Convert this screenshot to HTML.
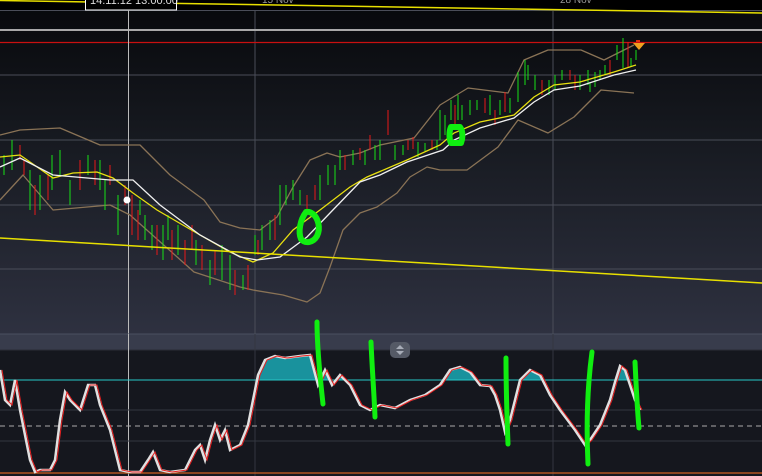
<!DOCTYPE html>
<html><head><meta charset="utf-8"><style>
html,body{margin:0;padding:0;background:#000;}
svg{display:block}
</style></head><body>
<svg width="762" height="476" viewBox="0 0 762 476" xmlns="http://www.w3.org/2000/svg" font-family="Liberation Sans, sans-serif">
<defs>
<linearGradient id="bg" x1="0" y1="0" x2="0" y2="1">
<stop offset="0" stop-color="#07080b"/>
<stop offset="0.45" stop-color="#181b22"/>
<stop offset="1" stop-color="#2e3140"/>
</linearGradient>
<clipPath id="above"><rect x="0" y="340" width="762" height="40"/></clipPath>
</defs>
<rect x="0" y="0" width="762" height="334" fill="url(#bg)"/>
<rect x="0" y="0" width="762" height="10" fill="#000"/>
<g stroke="#4a4d58" stroke-width="1">
<line x1="0" y1="75" x2="762" y2="75"/>
<line x1="0" y1="140" x2="762" y2="140"/>
<line x1="0" y1="205" x2="762" y2="205"/>
<line x1="0" y1="269" x2="762" y2="269"/>
<line x1="255" y1="10" x2="255" y2="334"/>
<line x1="553" y1="10" x2="553" y2="334"/>
<line x1="0" y1="10.5" x2="762" y2="10.5"/>
</g>
<line x1="0" y1="30" x2="762" y2="30" stroke="#a8a8a8" stroke-width="2"/>
<line x1="0" y1="42.5" x2="762" y2="42.5" stroke="#c81010" stroke-width="1.2"/>
<line x1="0" y1="0.5" x2="762" y2="13" stroke="#e8e000" stroke-width="1.5"/>
<rect x="85.5" y="-6" width="91" height="16" fill="#000" stroke="#fff"/>
<text x="90" y="4" fill="#ddd" font-size="11">14.11.12 13:00:00</text>
<text x="262" y="3" fill="#999" font-size="10">15 Nov</text>
<text x="560" y="3" fill="#999" font-size="10">28 Nov</text>
<line x1="128.5" y1="10" x2="128.5" y2="476" stroke="#bbb" stroke-width="1"/>
<g fill="none" stroke="#8a7356" stroke-width="1.3" stroke-linejoin="round">
<polyline points="0,135 20,130 60,128 100,145 140,145 170,175 204,200 220,222 240,228 260,230 277,217 293,187 310,160 327,153 340,157 360,153 380,145 414,138 440,105 468,88 508,93 524,60 548,50 581,50 604,60 634,45"/>
<polyline points="0,200 23,175 53,210 110,205 130,215 194,272 240,287 253,290 283,295 307,302 320,293 330,267 343,230 360,213 377,207 397,193 410,177 427,167 440,170 467,170 498,147 518,120 548,133 574,117 601,90 634,93"/>
</g>
<g stroke="#17e017" stroke-width="1">
<path d="M4 155v20M12 140v30M30 170v40M40 175v35M52 155v35M60 150v25M70 180v25M88 155v20M100 160v30M105 180v30M118 195v40M140 200v15M145 215v25M152 225v25M163 225v35M168 215v25M178 225v30M196 240v25M210 260v25M222 245v35M230 255v35M243 275v15M255 235v20M262 225v25M270 220v20M280 185v40M286 185v20M293 180v20M300 190v15M320 175v25M328 165v20M335 165v20M340 150v20M353 150v15M365 150v15M375 145v15M380 140v20M395 145v15M403 145v10M418 142v15M425 143v8M437 140v10M440 110v30M445 115v20M451 100v20M458 95v25M462 105v15M470 100v15M477 100v10M490 95v20M500 100v15M510 98v15M518 72v30M525 60v25M528 65v15M535 75v15M549 80v15M555 75v15M562 70v10M580 75v15M588 70v15M590 82v10M595 72v15M600 70v10M605 65v10M617 45v15M623 38v30M631 58v8M636 50v10"/>
</g>
<g stroke="#e81818" stroke-width="1">
<path d="M20 145v15M24 160v15M35 185v30M48 175v25M80 160v30M95 160v25M110 165v20M125 185v20M132 195v40M138 210v30M157 225v30M172 230v30M185 240v25M192 225v25M202 245v25M215 250v25M235 270v25M248 265v25M258 240v15M275 215v25M307 195v15M315 185v15M345 155v15M360 148v12M370 135v15M388 110v25M408 140v10M413 137v12M432 140v10M455 105v20M485 98v15M495 110v15M505 92v20M542 80v15M570 70v10M575 75v15M610 60v15M628 42v25"/>
</g>
<polyline fill="none" stroke="#e8e010" stroke-width="1.3" points="0,157 20,155 53,178 73,173 97,172 113,178 133,193 157,210 200,235 230,252 253,262 273,253 293,230 320,210 350,187 367,177 407,160 440,145 454,133 480,122 514,115 534,97 554,85 580,82 614,72 636,65"/>
<polyline fill="none" stroke="#f0f0f0" stroke-width="1.3" points="0,167 20,158 53,175 110,180 133,180 160,205 200,235 240,257 257,260 280,257 307,237 330,213 360,182 380,175 407,162 443,150 454,140 480,128 514,118 534,102 554,90 580,86 614,75 636,70"/>
<circle cx="127" cy="200" r="3.5" fill="#fff"/>
<line x1="0" y1="238" x2="762" y2="283" stroke="#e8e000" stroke-width="1.5"/>
<path d="M633 43h12l-6 7z" fill="#f0a020"/>
<rect x="636" y="40" width="4" height="2" fill="#e03010"/>
<rect x="0" y="334" width="762" height="16" fill="#383c4c"/>
<line x1="0" y1="334" x2="762" y2="334" stroke="#4a5060"/>
<rect x="0" y="350" width="762" height="126" fill="#15171e"/>
<line x1="0" y1="350" x2="762" y2="350" stroke="#2a2d36"/>
<line x1="128.5" y1="334" x2="128.5" y2="476" stroke="#bbb"/>
<line x1="255" y1="334" x2="255" y2="476" stroke="#333640"/>
<line x1="553" y1="334" x2="553" y2="476" stroke="#333640"/>
<line x1="0" y1="410" x2="762" y2="410" stroke="#343740"/>
<line x1="0" y1="441" x2="762" y2="441" stroke="#343740"/>
<line x1="0" y1="426" x2="762" y2="426" stroke="#aaa" stroke-dasharray="5,4"/>
<rect x="390" y="342" width="20" height="16" rx="5" fill="#555a66"/>
<path d="M396 349l4-4 4 4zM396 351l4 4 4-4z" fill="#a8adb8"/>
<polygon clip-path="url(#above)" fill="#1aa8b4" opacity="0.85" points="253,400 258,375 265,360 275,356 285,358 300,356 310,355 318,385 325,370 332,385 340,375 350,385 360,405 370,410 380,405 395,408 410,400 425,395 440,385 450,370 460,367 470,372 480,385 490,386 495,395 500,410 505,432 510,420 520,380 530,370 540,375 550,395 560,410 575,430 585,445 590,440 600,425 610,400 615,382 620,366 625,370 630,385 635,400 640,410 640,390 253,390"/>
<line x1="0" y1="380" x2="762" y2="380" stroke="#28c8c8" stroke-width="1"/>
<line x1="0" y1="473" x2="762" y2="473" stroke="#d06020" stroke-width="1.2"/>
<polyline fill="none" stroke="#e0e0e0" stroke-width="2.5" points="0,370 5,400 10,405 15,380 20,410 30,460 35,472 40,470 50,470 55,460 60,420 65,392 70,400 75,405 80,410 88,385 95,385 100,405 110,430 120,470 130,472 140,472 148,460 153,452 160,470 170,472 185,470 195,450 200,445 205,460 210,440 215,425 220,440 225,430 230,450 240,445 248,425 253,400 258,375 265,360 275,356 285,358 300,356 310,355 318,385 325,370 332,385 340,375 350,385 360,405 370,410 380,405 395,408 410,400 425,395 440,385 450,370 460,367 470,372 480,385 490,386 495,395 500,410 505,432 510,420 520,380 530,370 540,375 550,395 560,410 575,430 585,445 590,440 600,425 610,400 615,382 620,366 625,370 630,385 635,400 640,410"/>
<polyline fill="none" stroke="#e82020" stroke-width="1" transform="translate(2,0)" points="0,370 5,400 10,405 15,380 20,410 30,460 35,472 40,470 50,470 55,460 60,420 65,392 70,400 75,405 80,410 88,385 95,385 100,405 110,430 120,470 130,472 140,472 148,460 153,452 160,470 170,472 185,470 195,450 200,445 205,460 210,440 215,425 220,440 225,430 230,450 240,445 248,425 253,400 258,375 265,360 275,356 285,358 300,356 310,355 318,385 325,370 332,385 340,375 350,385 360,405 370,410 380,405 395,408 410,400 425,395 440,385 450,370 460,367 470,372 480,385 490,386 495,395 500,410 505,432 510,420 520,380 530,370 540,375 550,395 560,410 575,430 585,445 590,440 600,425 610,400 615,382 620,366 625,370 630,385 635,400 640,410"/>
<g fill="none" stroke="#10ee10" stroke-linecap="round" stroke-linejoin="round">
<path stroke-width="6" d="M306 212c-6 8-8 20-5 27 4 5 12 4 16-3 4-8 1-18-4-22-4-3-5-2-7-2"/>
<path stroke-width="6" d="M451 127c-2 4-2 12 0 16h10c2-5 2-12-1-16z"/>
<path stroke-width="5" d="M317 322c0 25 3 55 6 82"/>
<path stroke-width="5" d="M371 342c1 25 3 50 4 75"/>
<path stroke-width="5" d="M506 358c0 30 1 60 2 86"/>
<path stroke-width="5" d="M592 352c-4 30-6 70-4 112"/>
<path stroke-width="5" d="M635 362c1 20 2 45 4 66"/>
</g>
</svg>
</body></html>
